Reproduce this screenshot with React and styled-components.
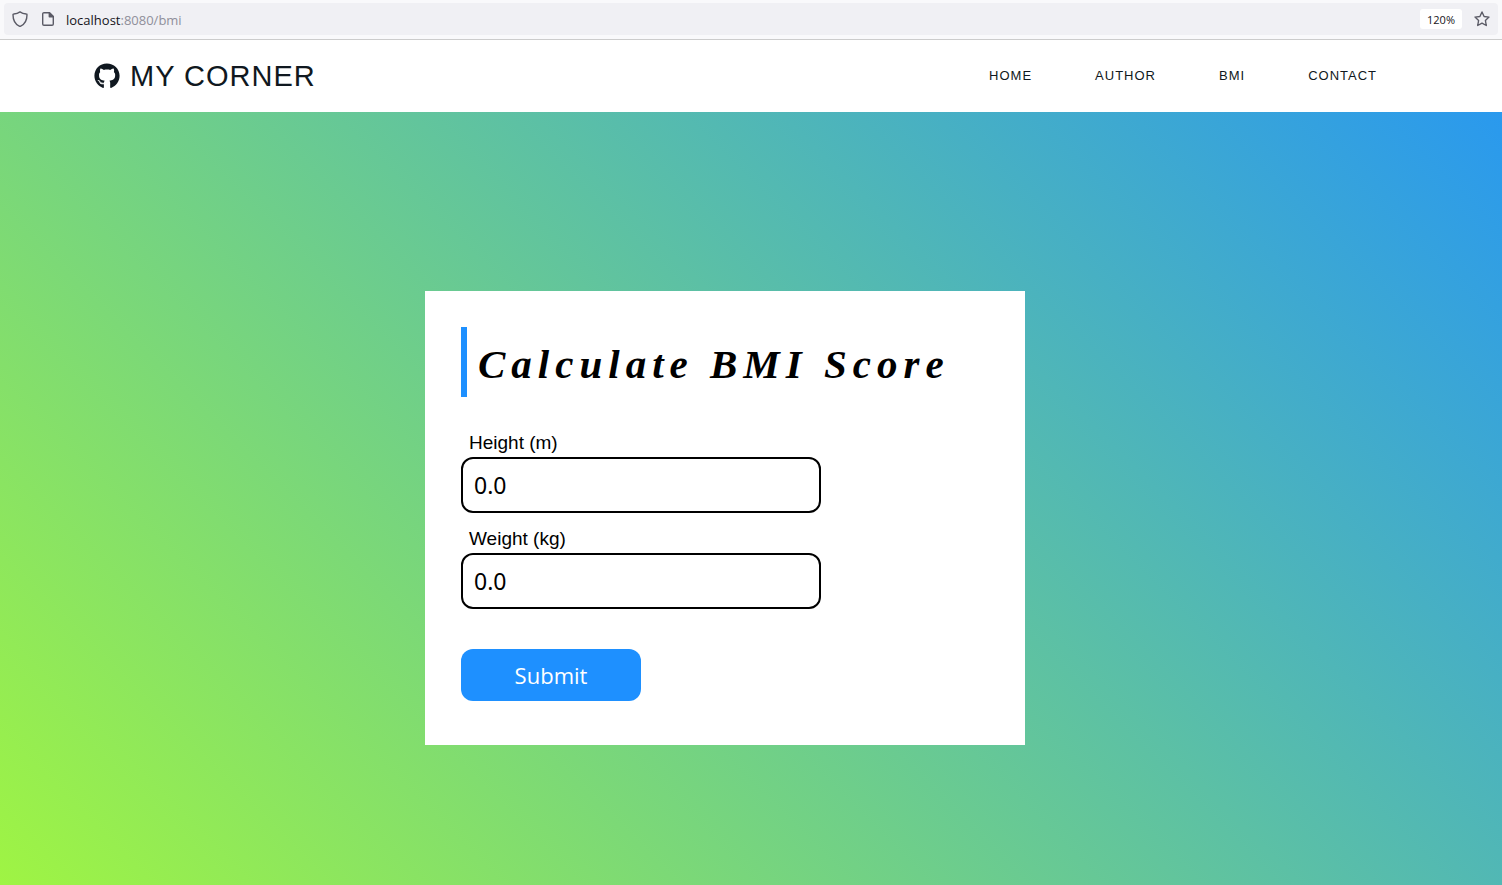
import React from "react";
import styled, { createGlobalStyle } from "styled-components";
import { FaGithub } from "react-icons/fa";

const GlobalStyle = createGlobalStyle`
  * { box-sizing: border-box; }
  body {
    margin: 0;
    background: #fff;
    color: #000;
    font-family: "Liberation Sans", Arial, sans-serif;
  }
`;

const Page = styled.div`
  min-height: 100vh;
  display: flex;
  flex-direction: column;
`;

const BrowserBar = styled.div`
  height: 40px;
  padding: 3px 4px 4px;
  background: #f9f9fb;
  border-bottom: 1px solid #cccccc;
`;

const UrlField = styled.div`
  height: 32px;
  padding: 0 8px;
  display: flex;
  align-items: center;
  gap: 12px;
  border-radius: 4px;
  background: #f0f0f4;
  color: #5b5b66;
  font-family: "Open Sans", "Noto Sans", sans-serif;
`;

const BarIcon = styled.svg`
  width: 16px;
  height: 16px;
  flex: none;
  fill: none;
  stroke: currentColor;
  stroke-width: 1.4;
  stroke-linejoin: round;
`;

const Url = styled.span`
  flex: 1;
  margin-left: -2px;
  padding-top: 2px;
  font-size: 13px;
  line-height: 20px;
  color: #8f8f9a;
`;

const Host = styled.span`
  color: #15141a;
`;

const ZoomButton = styled.button`
  height: 20px;
  padding: 1px 7px 0;
  border: 0;
  border-radius: 3px;
  background: #fff;
  color: #15141a;
  font-family: inherit;
  font-size: 11px;
  line-height: 20px;
`;

const Header = styled.header`
  height: 72px;
  padding: 0 125px 0 94px;
  display: flex;
  align-items: center;
  justify-content: space-between;
  background: #fff;
`;

const Brand = styled.a`
  display: flex;
  align-items: center;
  gap: 10px;
  color: #101820;
  font-size: 29px;
  line-height: 32px;
  letter-spacing: 1px;
  text-decoration: none;

  svg {
    width: 26px;
    height: 26px;
  }
`;

const Nav = styled.nav`
  display: flex;
  gap: 63px;
`;

const NavLink = styled.a`
  color: #101820;
  font-size: 13px;
  line-height: 16px;
  letter-spacing: 1px;
  text-decoration: none;
`;

const Hero = styled.main`
  flex: 1;
  padding: 179px 52px 140px 0;
  display: flex;
  align-items: flex-start;
  justify-content: center;
  background: linear-gradient(45deg, greenyellow -12%, dodgerblue 110%);
`;

const Card = styled.form`
  width: 100%;
  max-width: 600px;
  padding: 36px 36px 44px;
  background: #fff;
`;

const Title = styled.h1`
  height: 70px;
  margin: 0 0 34px;
  padding: 6px 0 0 11px;
  border-left: 6px solid dodgerblue;
  font-family: "Liberation Serif", serif;
  font-size: 41px;
  font-style: italic;
  font-weight: 700;
  line-height: 62px;
  letter-spacing: 6px;
  white-space: nowrap;
`;

const Field = styled.div`
  margin-bottom: 14px;
`;

const Label = styled.label`
  display: block;
  padding: 1px 8px 0;
  margin-bottom: 3px;
  font-size: 19px;
  line-height: 22px;
`;

const Input = styled.input`
  display: block;
  width: 360px;
  max-width: 100%;
  height: 56px;
  padding: 0 11px;
  border: 2px solid #000;
  border-radius: 12px;
  background: #fff;
  color: #000;
  font-family: "Noto Sans", sans-serif;
  font-size: 23px;
`;

const Submit = styled.button`
  display: block;
  width: 180px;
  height: 52px;
  margin-top: 40px;
  border: 0;
  border-radius: 12px;
  background: dodgerblue;
  color: #fff;
  font-family: "Open Sans", sans-serif;
  font-size: 22px;
`;

const links = ["HOME", "AUTHOR", "BMI", "CONTACT"];
const fields = [
  { id: "height", label: "Height (m)" },
  { id: "weight", label: "Weight (kg)" },
];

export default function App() {
  return (
    <Page>
      <GlobalStyle />
      <BrowserBar>
        <UrlField>
          <BarIcon viewBox="0 0 16 16" aria-hidden="true">
            <path d="M8 .9C6.200 2.300 4 2.900 1.700 3c-.4 0-.7.300-.7.700 0 5.300 1.700 9.200 6.300 11.400.5.200.9.200 1.400 0C13.300 12.900 15 9 15 3.700c0-.4-.3-.7-.7-.7C12 2.900 9.800 2.300 8 .9z" />
          </BarIcon>
          <BarIcon viewBox="0 0 16 16" aria-hidden="true">
            <path d="M4 1.700h5.500L13.300 5.500V13a1.300 1.300 0 0 1-1.300 1.300H4A1.300 1.300 0 0 1 2.700 13V3A1.300 1.300 0 0 1 4 1.700z" />
            <path d="M9.300 1.700v4h4z" fill="currentColor" />
          </BarIcon>
          <Url>
            <Host>localhost</Host>:8080/bmi
          </Url>
          <ZoomButton type="button">120%</ZoomButton>
          <BarIcon viewBox="0 0 16 16" aria-hidden="true">
            <path d="M8 1l2.100 4.500 4.900.6-3.600 3.400.9 5L8 12.100 3.700 14.500l.9-5L1 6.100l4.900-.6z" />
          </BarIcon>
        </UrlField>
      </BrowserBar>
      <Header>
        <Brand href="#home">
          <FaGithub aria-hidden="true" />
          MY CORNER
        </Brand>
        <Nav>
          {links.map((text) => (
            <NavLink key={text} href={`#${text.toLowerCase()}`}>
              {text}
            </NavLink>
          ))}
        </Nav>
      </Header>
      <Hero>
        <Card onSubmit={(e) => e.preventDefault()}>
          <Title>Calculate BMI Score</Title>
          {fields.map(({ id, label }) => (
            <Field key={id}>
              <Label htmlFor={id}>{label}</Label>
              <Input id={id} name={id} type="text" inputMode="decimal" defaultValue="0.0" />
            </Field>
          ))}
          <Submit type="submit">Submit</Submit>
        </Card>
      </Hero>
    </Page>
  );
}
